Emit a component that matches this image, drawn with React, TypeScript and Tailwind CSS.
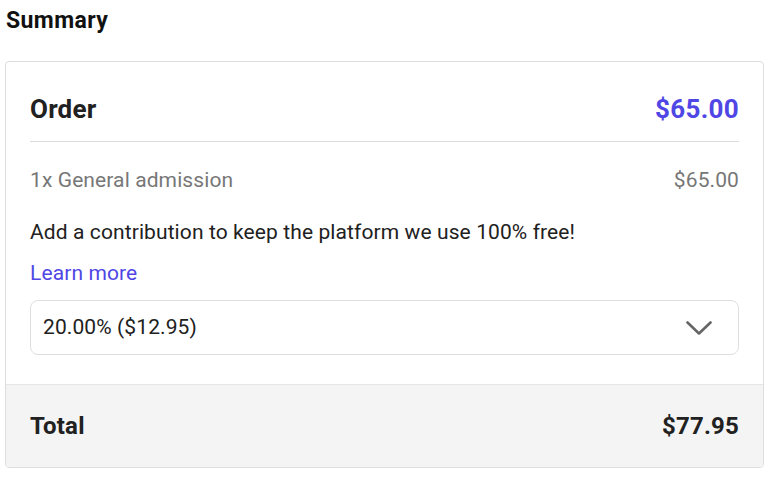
export default function App() {
    return (
        <div className="w-[768px] h-[478px] bg-white font-['Roboto',sans-serif] text-[#212121]">
            <h1 className="pl-[6px] pt-[1px] text-[23px] font-bold leading-[39px] tracking-[0.4px] text-[#111]">Summary</h1>
            <div className="mt-[21px] ml-[5px] w-[759px] rounded-[4px] border border-[#dedede] overflow-hidden">
                <div className="px-[24px] pb-[29px]">
                    <div className="flex items-center justify-between pt-[30px] pb-[15px] border-b border-[#dcdcdc]">
                        <span className="text-[26px] font-bold leading-[34px] tracking-[0.2px]">Order</span>
                        <span className="text-[26px] font-bold leading-[34px] tracking-[0.3px] text-[#4f46e5]">$65.00</span>
                    </div>
                    <div className="mt-[24px] flex items-center justify-between text-[21px] leading-[28px] tracking-[0.1px] text-[#777]">
                        <span>1x General admission</span>
                        <span>$65.00</span>
                    </div>
                    <p className="mt-[24px] text-[21px] leading-[28px] tracking-[0.1px]">
                        Add a contribution to keep the platform we use 100% free!
                    </p>
                    <a className="mt-[13px] block text-[21px] leading-[28px] tracking-[0.1px] text-[#4f46e5]" href="#">
                        Learn more
                    </a>
                    <div className="mt-[13px] h-[55px] flex items-center justify-between rounded-[8px] border border-[#dedede] pl-[12px] pr-[26px]">
                        <span className="text-[21px] tracking-[0.1px]">20.00% ($12.95)</span>
                        <svg width="26" height="14" viewBox="0 0 26 14" fill="none" className="text-[#666]">
                            <polyline points="1.5,1.5 13,12.5 24.5,1.5" stroke="currentColor" strokeWidth="2.6" strokeLinecap="round" strokeLinejoin="round" />
                        </svg>
                    </div>
                </div>
                <div className="h-[83px] flex items-center justify-between px-[24px] border-t border-[#e6e6e6] bg-[#f4f4f4]">
                    <span className="text-[24px] font-bold tracking-[0.2px]">Total</span>
                    <span className="text-[24px] font-bold tracking-[0.2px]">$77.95</span>
                </div>
            </div>
        </div>
    );
}
